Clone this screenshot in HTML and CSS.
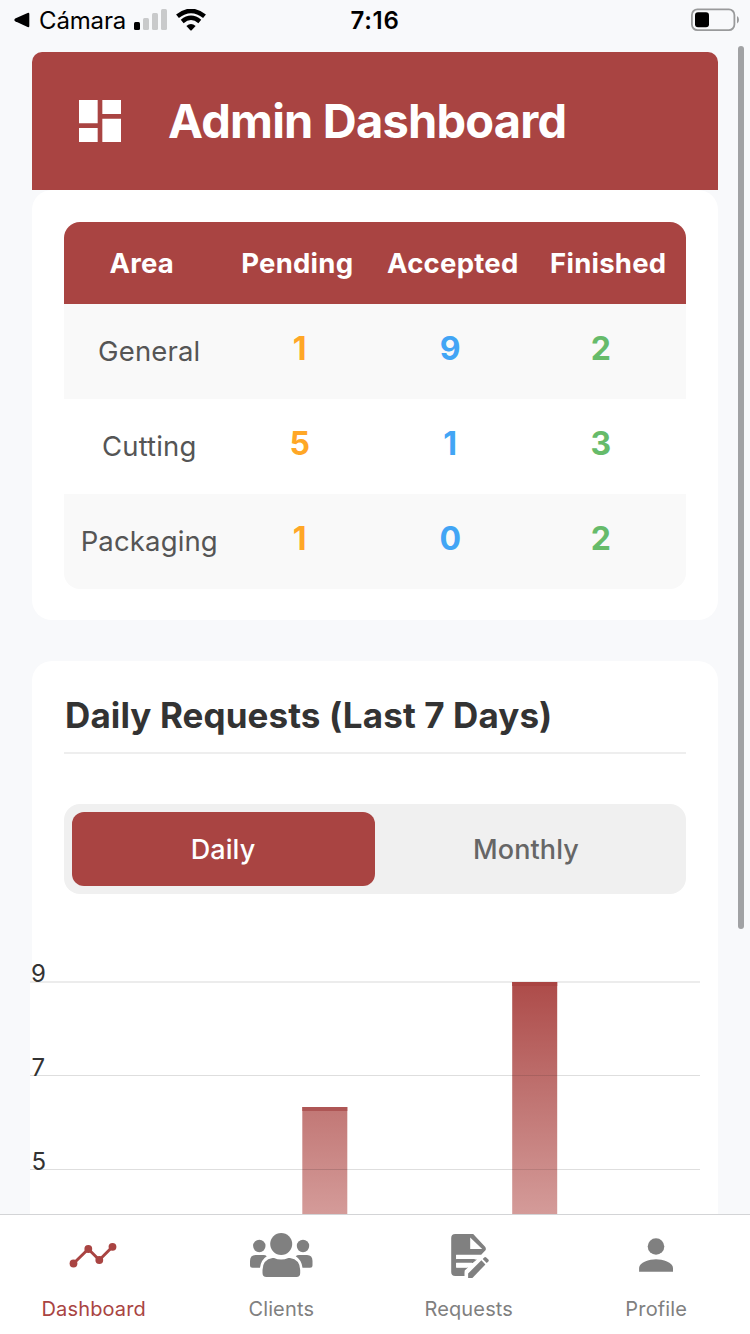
FILE: index.html
```html
<!DOCTYPE html>
<html lang="en">
<head>
<meta charset="utf-8">
<title>Admin Dashboard</title>
<link rel="stylesheet" href="styles.css">
</head>
<body>
<div class="screen">
  <header class="status">
    <div class="status-left">
      <svg class="back" width="16" height="16" viewBox="0 0 16 16"><path d="M1.200 6.500 13.600.9Q15.300.3 15.300 2v12q0 1.700-1.700 1.100L1.200 9.200Q-.5 8 1.200 6.500Z"/></svg>
      <span class="back-label">Cámara</span>
      <svg class="signal" width="34" height="22" viewBox="0 0 34 22"><rect x="0" y="13" width="6" height="8" rx="1.500"/><g fill="#c9cacb"><rect x="9" y="9" width="6" height="12" rx="1.500"/><rect x="18" y="4" width="6" height="17" rx="1.500"/><rect x="27" y="0" width="6" height="21" rx="1.500"/></g></svg>
      <svg class="wifi" width="30" height="22" viewBox="0 0 30 22"><g fill="none" stroke="#000" stroke-width="4.500"><path d="M1.500 7.300Q15-3.500 28.500 7.300"/><path d="M6.200 12.400Q15 5.200 23.800 12.400"/></g><path d="M10.400 16.900Q15 13.300 19.600 16.900L15.700 21.200Q15 21.800 14.300 21.200Z"/></svg>
    </div>
    <time class="clock">7:16</time>
    <svg class="battery" width="50" height="24" viewBox="0 0 50 24"><rect x="1.900" y="1.400" width="42.500" height="20.700" rx="5.500" fill="none" stroke="#999a9b" stroke-width="1.800"/><rect x="5" y="4.200" width="14" height="15" rx="3"/><path d="M47 8q2 1 2 3.800T47 15.500Z" fill="#999a9b"/></svg>
  </header>

  <main class="content">
    <section class="hero">
      <svg width="42" height="42" viewBox="3 3 18 18" fill="#fff"><path d="M3 13h8V3H3v10zm0 8h8v-6H3v6zm10 0h8V11h-8v10zm0-18v6h8V3h-8z"/></svg>
      <h1>Admin Dashboard</h1>
    </section>

    <section class="card summary">
      <div class="table">
        <div class="thead"><span>Area</span><span>Pending</span><span>Accepted</span><span>Finished</span></div>
        <div class="row"><span class="area">General</span><b class="pending">1</b><b class="accepted">9</b><b class="finished">2</b></div>
        <div class="row"><span class="area">Cutting</span><b class="pending">5</b><b class="accepted">1</b><b class="finished">3</b></div>
        <div class="row"><span class="area">Packaging</span><b class="pending">1</b><b class="accepted">0</b><b class="finished">2</b></div>
      </div>
    </section>

    <section class="card requests">
      <h2>Daily Requests (Last 7 Days)</h2>
      <div class="toggle"><span class="option active">Daily</span><span class="option">Monthly</span></div>
      <svg class="chart" width="688" height="300" viewBox="30 934 688 300">
        <defs><linearGradient id="bar" gradientUnits="userSpaceOnUse" x1="0" y1="982" x2="0" y2="1214"><stop offset="0" stop-color="#ad4b49"/><stop offset=".5" stop-color="#c07472"/><stop offset="1" stop-color="#d49b99"/></linearGradient></defs>
        <rect x="30" y="981" width="688" height="253" fill="#fff"/>
        <rect x="302.300" y="1107" width="45" height="127" fill="url(#bar)"/>
        <rect x="302.300" y="1107" width="45" height="4" fill="#ae5655"/>
        <path d="M30 982H700" stroke="#ececec" stroke-width="2"/>
        <path d="M30 1075.500H700M30 1169.500H700" stroke="#000" stroke-opacity=".13"/>
        <rect x="512.200" y="982" width="45" height="252" fill="url(#bar)"/>
        <rect x="512.200" y="982" width="45" height="4" fill="#a94442"/>
        <path d="M512 1075.500h45M512 1169.500h45" stroke="#000" stroke-opacity=".1"/>
        <g fill="#333"><text x="31" y="982">9</text><text x="31.500" y="1076">7</text><text x="31.500" y="1170">5</text></g>
      </svg>
    </section>
  </main>

  <nav class="tabs">
    <a class="tab current">
      <svg width="64" height="50" viewBox="0 0 64 50"><path d="M11.500 28.500 26.300 14 37.300 25 50.500 11.800" fill="none" stroke="currentColor" stroke-width="3"/><g fill="currentColor"><circle cx="11.500" cy="28.500" r="3.900"/><circle cx="26.300" cy="14" r="3.900"/><circle cx="37.300" cy="25" r="3.900"/><circle cx="50.500" cy="11.800" r="3.900"/></g></svg>
      <span>Dashboard</span>
    </a>
    <a class="tab">
      <svg width="64" height="50" viewBox="0 0 64 50" fill="currentColor"><circle cx="10.300" cy="11" r="6.200"/><circle cx="54" cy="11" r="6.200"/><circle cx="32.200" cy="9" r="11"/><path d="M6.500 20h8q2 0 3.300 1.300-5.800 3.500-6.800 11.500H3.500q-2.500 0-2.500-2.500V26q0-6 5.500-6Z"/><path d="M58 20h-8q-2 0-3.300 1.300 5.800 3.500 6.800 11.500H61q2.500 0 2.500-2.500V26q0-6-5.500-6Z"/><path d="M23.500 23h1.500q7 3.200 14.400 0H41q10 1.500 10.200 12v3q0 4-3.700 4h-30q-4 0-4-4v-3Q13.700 24.500 23.500 23Z"/></svg>
      <span>Clients</span>
    </a>
    <a class="tab">
      <svg width="64" height="50" viewBox="1.300 0 64 50" fill="currentColor"><path fill-rule="evenodd" d="M19.500-.9H37.500L49.400 11.700Q50.500 13 50 15L45.500 19.700H20.500V24.400H41.200L37 28H20.500V32.200H32.500L29 35.500L28.800 38V41H19.500Q15.500 41 15.500 37V3Q15.500-.9 19.500-.9ZM34.500 2.500V14H46.500Z"/><path d="M20.500 20H43L39.500 24H20.500Z" fill="#fff"/><path d="M20.500 24H39.500L36 27.800H20.500Z"/><path d="M20.500 27.800H36.500L31.500 32.800H20.500Z" fill="#fff"/><path d="M32.400 38.500 45.700 25.300 49.700 29.500 36.700 43H32.400Z"/><path d="M47 23.900 48.500 22.400q1-.8 2 0l2.200 2.200q.9.900 0 1.900L51 28Z"/></svg>
      <span>Requests</span>
    </a>
    <a class="tab">
      <svg width="64" height="50" viewBox="0.500 0 64 50" fill="currentColor"><circle cx="32.500" cy="11.500" r="8.300"/><path d="M15.600 36.700V33C15.600 27 26 24.200 32.500 24.200S49.500 27 49.500 33V36.700Z"/></svg>
      <span>Profile</span>
    </a>
  </nav>
  <div class="scrollbar"></div>
</div>
</body>
</html>
```

FILE: styles.css
```css
* { box-sizing: border-box; }
body { margin: 0; font-family: Inter, "Liberation Sans", sans-serif; color: #333; }
.screen { position: relative; width: 750px; height: 1334px; overflow: hidden; display: flex; flex-direction: column; background: #f8f9fb; }

.status { height: 52px; flex: none; display: grid; grid-template-columns: 1fr auto 1fr; align-items: start; color: #000; }
.status-left { display: flex; padding-left: 14px; }
.back { margin-top: 12px; }
.back-label { margin-left: 9px; width: 88px; font-size: 24px; line-height: 42px; letter-spacing: -.15px; white-space: nowrap; }
.signal { margin: 9px 0 0 7px; }
.wifi { margin: 9px 0 0 8px; }
.clock { font-size: 24px; line-height: 42px; font-weight: 600; letter-spacing: .7px; }
.battery { justify-self: end; margin: 8px 10px 0 0; }

.content { flex: 1; min-height: 0; padding: 0 32px; overflow: hidden; }
.hero { height: 138px; padding-left: 47px; display: flex; align-items: center; gap: 47px; color: #fff; background: #a94442; border-radius: 10px 10px 0 0; }
.hero h1 { margin: 0; font-size: 47px; line-height: 60px; font-weight: 700; letter-spacing: -.8px; white-space: nowrap; }
.card { background: #fff; border-radius: 20px; }
.summary { height: 430px; padding: 32px; }
.table { border-radius: 16px; overflow: hidden; text-align: center; }
.thead { height: 82px; display: grid; grid-template-columns: repeat(4, 1fr); background: #a94442; color: #fff; font-size: 27.5px; font-weight: 650; line-height: 82px; letter-spacing: .25px; }
.row { height: 95px; padding: 0 10px; display: grid; grid-template-columns: repeat(4, 1fr); line-height: 95px; }
.row:nth-child(even) { background: #f9f9f9; }
.area { font-size: 27.5px; letter-spacing: .15px; color: #555; font-feature-settings: "calt" 0; }
.row b { font-size: 32px; font-weight: 700; line-height: 89px; }
.pending { color: #ffa726; }
.accepted { color: #42a5f5; }
.finished { color: #66bb6a; }

.requests { margin-top: 41px; height: 700px; padding: 32px 32px 0; }
.requests h2 { margin: 0; height: 61px; padding-left: 1px; border-bottom: 2px solid #eee; font-size: 35px; line-height: 45px; font-weight: 700; letter-spacing: .1px; white-space: nowrap; }
.toggle { margin-top: 50px; height: 90px; padding: 8px; display: grid; grid-template: 74px / 1fr 1fr; background: #f0f0f0; border-radius: 16px; }
.option { border-radius: 12px; line-height: 75px; font-size: 27px; font-weight: 500; letter-spacing: .1px; padding-right: 1px; color: #666; text-align: center; }
.option.active { background: #a94442; color: #fff; }
.chart { display: block; margin: 40px 0 0 -34px; font-size: 24px; }

.tabs { flex: none; height: 120px; display: grid; grid-template-columns: repeat(4, 1fr); background: #fff; border-top: 1px solid #d3d4d6; }
.tab { display: flex; flex-direction: column; align-items: center; padding-top: 20px; color: #808080; font-size: 20px; letter-spacing: .15px; }
.tab svg { overflow: visible; }
.tab span { margin-top: 12px; line-height: 24px; }
.tab.current { color: #a94442; }
.scrollbar { position: absolute; left: 738px; top: 46px; width: 6px; height: 883px; border-radius: 3px; background: #a1a2a4; }
```
